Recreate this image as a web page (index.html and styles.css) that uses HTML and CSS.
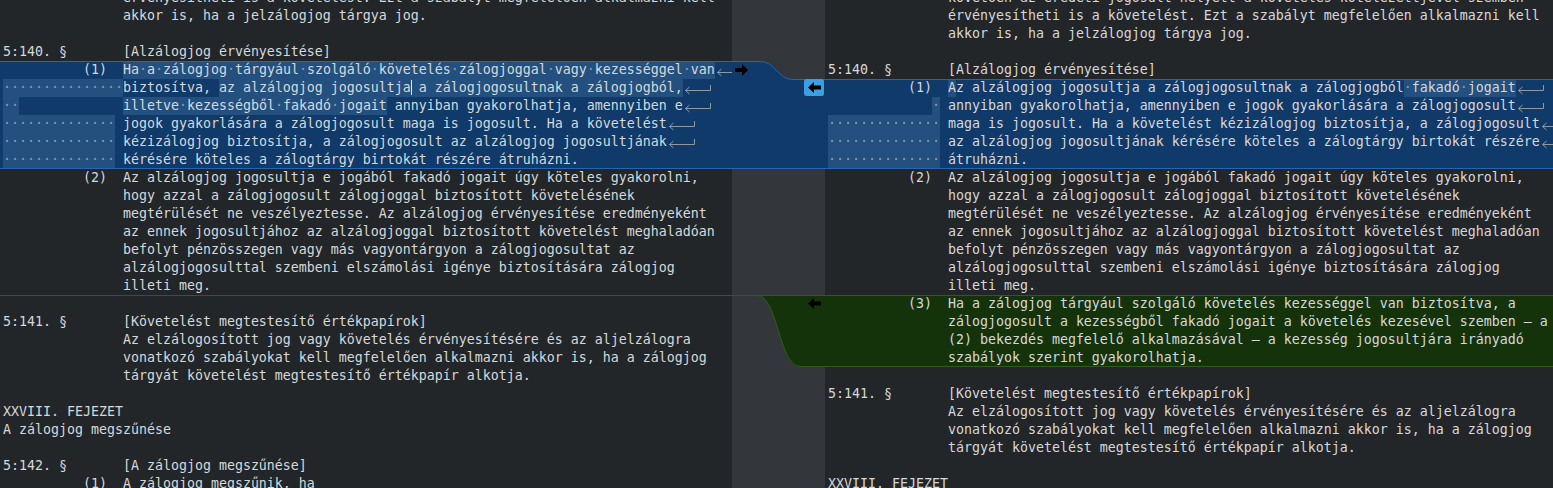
FILE: index.html
```html
<!DOCTYPE html>
<html lang="hu">
<head>
<meta charset="utf-8">
<title>Meld</title>
<link rel="stylesheet" href="styles.css">
</head>
<body>
<svg class="defs" width="0" height="0">
  <symbol id="nlsym" viewBox="0 0 28 18">
    <path d="M1.5 11.5 H26.5 V6" fill="none" stroke="#8f99a5" stroke-width="1"/>
    <path d="M5.5 8 L1.5 11.5 L5.5 15" fill="none" stroke="#8f99a5" stroke-width="1"/>
  </symbol>
</svg>
<div class="view">
  <div class="pane left">
    <div class="lines">
      <div class="ln">               érvényesítheti is a követelést. Ezt a szabályt megfelelően alkalmazni kell</div>
      <div class="ln">               akkor is, ha a jelzálogjog tárgya jog.</div>
      <div class="ln"></div>
      <div class="ln">5:140. §       [Alzálogjog érvényesítése]</div>
      <div class="chunk chg">
        <div class="ln">          (1)  <span class="hl">Ha<span class="d">·</span>a<span class="d">·</span>zálogjog<span class="d">·</span>tárgyául<span class="d">·</span>szolgáló<span class="d">·</span>követelés<span class="d">·</span>zálogjoggal<span class="d">·</span>vagy<span class="d">·</span>kezességgel<span class="d">·</span>van</span><svg class="nl"><use href="#nlsym"/></svg></div>
        <div class="ln"><span class="hl"><span class="d">···············</span></span>biztosítva, <span class="hl">az alzálogjog jogosultja<span class="caret"></span> a zálogjogosultnak a zálogjogból,</span><svg class="nl"><use href="#nlsym"/></svg></div>
        <div class="ln"><span class="hl"><span class="d">··</span></span>             <span class="hl">illetve<span class="d">·</span>kezességből<span class="d">·</span>fakadó<span class="d">·</span>jogait</span> annyiban gyakorolhatja, amennyiben e<svg class="nl"><use href="#nlsym"/></svg></div>
        <div class="ln"><span class="hl"><span class="d">··············</span></span> jogok gyakorlására a zálogjogosult maga is jogosult. Ha a követelést<svg class="nl"><use href="#nlsym"/></svg></div>
        <div class="ln"><span class="hl"><span class="d">··············</span></span> kézizálogjog biztosítja, a zálogjogosult az alzálogjog jogosultjának<svg class="nl"><use href="#nlsym"/></svg></div>
        <div class="ln"><span class="hl"><span class="d">··············</span></span> kérésére köteles a zálogtárgy birtokát részére átruházni.</div>
      </div>
      <div class="ln">          (2)  Az alzálogjog jogosultja e jogából fakadó jogait úgy köteles gyakorolni,</div>
      <div class="ln">               hogy azzal a zálogjogosult zálogjoggal biztosított követelésének</div>
      <div class="ln">               megtérülését ne veszélyeztesse. Az alzálogjog érvényesítése eredményeként</div>
      <div class="ln">               az ennek jogosultjához az alzálogjoggal biztosított követelést meghaladóan</div>
      <div class="ln">               befolyt pénzösszegen vagy más vagyontárgyon a zálogjogosultat az</div>
      <div class="ln">               alzálogjogosulttal szembeni elszámolási igénye biztosítására zálogjog</div>
      <div class="ln">               illeti meg.</div>
      <div class="ln mark"></div>
      <div class="ln">5:141. §       [Követelést megtestesítő értékpapírok]</div>
      <div class="ln">               Az elzálogosított jog vagy követelés érvényesítésére és az aljelzálogra</div>
      <div class="ln">               vonatkozó szabályokat kell megfelelően alkalmazni akkor is, ha a zálogjog</div>
      <div class="ln">               tárgyát követelést megtestesítő értékpapír alkotja.</div>
      <div class="ln"></div>
      <div class="ln">XXVIII. FEJEZET</div>
      <div class="ln">A zálogjog megszűnése</div>
      <div class="ln"></div>
      <div class="ln">5:142. §       [A zálogjog megszűnése]</div>
      <div class="ln">          (1)  A zálogjog megszűnik, ha</div>
    </div>
  </div>

  <div class="gutter">
    <svg class="links" width="93" height="488" viewBox="0 0 93 488">
      <path d="M0 61 H28 C44 61 45 79 61 79 H93 V169 H0 Z" fill="#0f3a6a"/>
      <path d="M0 61.5 H28 C44 61.5 45 79.5 61 79.5 H93" fill="none" stroke="#2765ae"/>
      <path d="M0 168.5 H93" stroke="#2765ae"/>
      <path d="M25 295 H93 V367 H68 C47 367 46 295 25 295 Z" fill="#14330b"/>
      <path d="M0 295.5 H93" stroke="#2e5c19"/>
      <path d="M25 295.5 C46 295.5 47 366.5 68 366.5 H93" fill="none" stroke="#2e5c19"/>
      <path d="M3 68 H10 V64 L16 70 L10 76 V72 H3 Z" fill="#000"/>
      <rect x="72" y="79" width="20" height="17" rx="2.5" fill="#3d9fe2"/>
      <path d="M76 87.5 L82 82 V85.5 H89 V89.5 H82 V93 Z" fill="#000"/>
      <path d="M76 303.5 L82 298 V301.5 H89 V305.5 H82 V309 Z" fill="#000"/>
    </svg>
  </div>

  <div class="pane right">
    <div class="lines">
      <div class="ln">               követően az eredeti jogosult helyett a követelés kötelezettjével szemben</div>
      <div class="ln">               érvényesítheti is a követelést. Ezt a szabályt megfelelően alkalmazni kell</div>
      <div class="ln">               akkor is, ha a jelzálogjog tárgya jog.</div>
      <div class="ln"></div>
      <div class="ln">5:140. §       [Alzálogjog érvényesítése]</div>
      <div class="chunk chg">
        <div class="ln">          (1)  <span class="hl">A</span>z alzálogjog jogosultja a zálogjogosultnak a zálogjogból<span class="hl"><span class="d">·</span>fakadó<span class="d">·</span>jogait</span><svg class="nl"><use href="#nlsym"/></svg></div>
        <div class="ln">             <span class="hl"><span class="d">·</span></span> annyiban gyakorolhatja, amennyiben e jogok gyakorlására a zálogjogosult<svg class="nl"><use href="#nlsym"/></svg></div>
        <div class="ln"><span class="hl"><span class="d">··············</span></span> maga is jogosult. Ha a követelést kézizálogjog biztosítja, a zálogjogosult<svg class="nl"><use href="#nlsym"/></svg></div>
        <div class="ln"><span class="hl"><span class="d">··············</span></span> az alzálogjog jogosultjának kérésére köteles a zálogtárgy birtokát részére<svg class="nl"><use href="#nlsym"/></svg></div>
        <div class="ln"><span class="hl"><span class="d">··············</span></span> átruházni.</div>
      </div>
      <div class="ln">          (2)  Az alzálogjog jogosultja e jogából fakadó jogait úgy köteles gyakorolni,</div>
      <div class="ln">               hogy azzal a zálogjogosult zálogjoggal biztosított követelésének</div>
      <div class="ln">               megtérülését ne veszélyeztesse. Az alzálogjog érvényesítése eredményeként</div>
      <div class="ln">               az ennek jogosultjához az alzálogjoggal biztosított követelést meghaladóan</div>
      <div class="ln">               befolyt pénzösszegen vagy más vagyontárgyon a zálogjogosultat az</div>
      <div class="ln">               alzálogjogosulttal szembeni elszámolási igénye biztosítására zálogjog</div>
      <div class="ln">               illeti meg.</div>
      <div class="chunk ins">
        <div class="ln">          (3)  Ha a zálogjog tárgyául szolgáló követelés kezességgel van biztosítva, a</div>
        <div class="ln">               zálogjogosult a kezességből fakadó jogait a követelés kezesével szemben – a</div>
        <div class="ln">               (2) bekezdés megfelelő alkalmazásával – a kezesség jogosultjára irányadó</div>
        <div class="ln">               szabályok szerint gyakorolhatja.</div>
      </div>
      <div class="ln"></div>
      <div class="ln">5:141. §       [Követelést megtestesítő értékpapírok]</div>
      <div class="ln">               Az elzálogosított jog vagy követelés érvényesítésére és az aljelzálogra</div>
      <div class="ln">               vonatkozó szabályokat kell megfelelően alkalmazni akkor is, ha a zálogjog</div>
      <div class="ln">               tárgyát követelést megtestesítő értékpapír alkotja.</div>
      <div class="ln"></div>
      <div class="ln">XXVIII. FEJEZET</div>
    </div>
  </div>
</div>
</body>
</html>
```

FILE: styles.css
```css
html, body {
  margin: 0;
  height: 100%;
  overflow: hidden;
  background: #232629;
}

.defs {
  position: absolute;
  width: 0;
  height: 0;
}

.view {
  display: flex;
  height: 488px;
}

.pane {
  overflow: hidden;
  background: #232629;
  color: #d5d8db;
  font-family: "DejaVu Sans Mono", "Liberation Mono", monospace;
  font-size: 13.29px;
}

.left {
  width: 732px;
  flex: none;
}

.gutter {
  width: 93px;
  flex: none;
  background: #33363b;
}

.links {
  display: block;
}

.right {
  flex: 1;
  min-width: 0;
}

.lines {
  margin-top: -11px;
}

.ln {
  height: 18px;
  line-height: 18px;
  white-space: pre;
  padding-left: 3px;
}

.chunk {
  position: relative;
}

.chunk::after {
  content: "";
  position: absolute;
  left: 0;
  right: 0;
  top: 0;
  bottom: 0;
  border-top: 1px solid;
  border-bottom: 1px solid;
  pointer-events: none;
}

.chg {
  background: #0f3a6a;
}

.chg::after {
  border-color: #2765ae;
}

.ins {
  background: #14330b;
}

.ins::after {
  border-color: #2e5c19;
}

.mark {
  box-shadow: inset 0 1px #2e5c19;
}

.hl {
  display: inline-block;
  height: 18px;
  vertical-align: top;
  background: #24507f;
}

.d {
  color: #8f9aa8;
}

.nl {
  display: inline-block;
  width: 28px;
  height: 18px;
  vertical-align: top;
  margin-left: 1px;
}

.caret {
  display: inline-block;
  width: 1px;
  height: 15px;
  margin-right: -1px;
  background: #e6e6e6;
  vertical-align: -3px;
}
```
